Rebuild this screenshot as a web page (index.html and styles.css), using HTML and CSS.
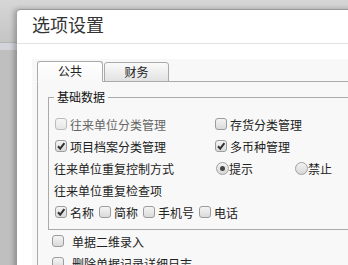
FILE: index.html
```html
<!DOCTYPE html>
<html lang="zh-CN">
<head>
  <meta charset="UTF-8">
  <meta name="viewport" content="width=device-width, initial-scale=1.0">
  <title>选项设置</title>
  <link rel="stylesheet" href="styles.css">
</head>
<body>

<div class="dialog">
  <div class="dialog-head">
    <h1 class="dialog-title">选项设置</h1>
  </div>
  <div class="dialog-body">
    <div class="tabs">
      <ul class="tab-nav">
        <li class="tab active">公共</li>
        <li class="tab">财务</li>
      </ul>
      <div class="tab-panel">
        <fieldset class="group">
          <legend>基础数据</legend>
          <div class="grid">
            <label class="check disabled"><span class="box"></span>往来单位分类管理</label>
            <label class="check"><span class="box"></span>存货分类管理</label>
            <label class="check"><span class="box"><svg viewBox="0 0 10 10"><path d="M2 5.2 L4.2 7.6 L8.4 2.2"/></svg></span>项目档案分类管理</label>
            <label class="check"><span class="box"><svg viewBox="0 0 10 10"><path d="M2 5.2 L4.2 7.6 L8.4 2.2"/></svg></span>多币种管理</label>

            <div class="text">往来单位重复控制方式</div>
            <div class="radios">
              <label class="radio"><span class="dot on"></span>提示</label>
              <label class="radio"><span class="dot"></span>禁止</label>
            </div>

            <div class="text wide">往来单位重复检查项</div>
            <div class="inline wide">
              <label class="check"><span class="box"><svg viewBox="0 0 10 10"><path d="M2 5.2 L4.2 7.6 L8.4 2.2"/></svg></span>名称</label>
              <label class="check"><span class="box"></span>简称</label>
              <label class="check"><span class="box"></span>手机号</label>
              <label class="check"><span class="box"></span>电话</label>
            </div>
          </div>
        </fieldset>

        <label class="check opt"><span class="box"></span>单据二维录入</label>
        <label class="check opt"><span class="box"></span>删除单据记录详细日志</label>
      </div>
    </div>
  </div>
</div>

</body>
</html>
```

FILE: styles.css
```css
body {
  margin: 0;
  height: 265px;
  overflow: hidden;
  font-family: "Noto Sans CJK SC", "Microsoft YaHei", sans-serif;
  font-size: 12px;
  color: #222;
  background: linear-gradient(#d6d6d6 0, #c5c5c5 42px, #b4b4b4 42px, #b4b4b4 43px, #d3d4db 43px, #d3d4db 50px, #bfbfbf 50px);
}
.dialog {
  margin: 9px 0 0 17px;
  width: 420px;
  height: 300px;
  background-color: #fff;
  border-top: 1px solid #9a9a9a;
  border-top-left-radius: 4px;
  box-shadow: -3px 0 5px rgba(0, 0, 0, 0.25);
}
.dialog-head {
  height: 33px;
  padding-left: 15px;
  border-bottom: 1px solid #e2e2e2;
}
.dialog-title {
  margin: 0;
  font-size: 18px;
  font-weight: normal;
  line-height: 28px;
  color: #333;
}
.dialog-body {
  padding: 15px 0 0 15px;
}
.tabs {
  height: 260px;
  padding: 2px 0 0 5px;
  background-color: #f8f8f8;
}
.tab-nav {
  display: flex;
  align-items: flex-end;
  gap: 1px;
  height: 20px;
  margin: 0;
  padding: 0;
  list-style: none;
  border-bottom: 1px solid #aaa;
}
.tab {
  box-sizing: border-box;
  width: 65px;
  height: 20px;
  margin-bottom: -1px;
  border: 1px solid #aaa;
  border-radius: 3px 3px 0 0;
  text-align: center;
  line-height: 17px;
  background: linear-gradient(#fafafa, #e2e2e2);
}
.tab.active {
  width: 66px;
  height: 21px;
  background: linear-gradient(#fff, #f8f8f8);
  border-bottom-color: #f8f8f8;
}
.tab-panel {
  border-left: 1px solid #aaa;
  padding: 7px 0 0 10px;
}
.group {
  margin: 0;
  padding: 8px 0 6px 5px;
  border: 1px solid #aaa;
}
.group legend {
  padding: 0 3px;
  line-height: 16px;
  color: #111;
}
.grid {
  display: grid;
  grid-template-columns: 160px auto;
  grid-auto-rows: 22px;
  align-items: center;
}
.wide {
  grid-column: 1 / 3;
}
.check {
  display: flex;
  align-items: center;
}
.check.disabled {
  color: #666;
}
.box {
  box-sizing: border-box;
  display: flex;
  align-items: center;
  justify-content: center;
  width: 12px;
  height: 12px;
  margin: 0 3px 0 1px;
  border: 1px solid #9c9c9c;
  border-radius: 3px;
  background: linear-gradient(#f4f4f4, #dadada);
}
.check.disabled .box {
  border-color: #bcbcbc;
  background: linear-gradient(#f6f6f6, #e6e6e6);
}
.box svg {
  width: 10px;
  height: 10px;
  fill: none;
  stroke: #333;
  stroke-width: 2;
}
.radios {
  display: flex;
}
.radio {
  display: flex;
  align-items: center;
  width: 79px;
}
.dot {
  box-sizing: border-box;
  display: flex;
  align-items: center;
  justify-content: center;
  width: 13px;
  height: 13px;
  margin-left: 2px;
  border: 1px solid #a0a0a0;
  border-radius: 50%;
  background: linear-gradient(#f2f2f2, #d8d8d8);
}
.dot.on::after {
  content: "";
  width: 5px;
  height: 5px;
  border-radius: 50%;
  background-color: #444;
}
.inline {
  display: flex;
  gap: 4px;
}
.opt {
  height: 22px;
  padding-left: 4px;
}
.opt .box {
  margin: 0 8px 0 0;
}
```
